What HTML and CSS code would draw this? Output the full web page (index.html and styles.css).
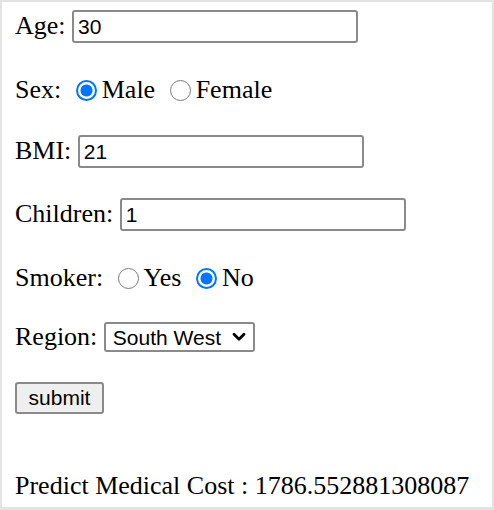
FILE: index.html
```html
<!DOCTYPE html>
<html>
<head>
<meta charset="utf-8">
<link rel="stylesheet" href="styles.css">
</head>
<body>
<div class="page">
  <form class="form">
    <div class="row first">
      <span class="label">Age:</span>
      <input class="field" type="text" value="30">
    </div>
    <div class="row choice">
      <span class="label">Sex:</span>
      <label class="opt"><input class="radio" type="radio" name="sex" checked>Male</label>
      <label class="opt"><input class="radio" type="radio" name="sex">Female</label>
    </div>
    <div class="row">
      <span class="label">BMI:</span>
      <input class="field" type="text" value="21">
    </div>
    <div class="row">
      <span class="label">Children:</span>
      <input class="field" type="text" value="1">
    </div>
    <div class="row choice">
      <span class="label">Smoker:</span>
      <label class="opt"><input class="radio" type="radio" name="smoker">Yes</label>
      <label class="opt"><input class="radio" type="radio" name="smoker" checked>No</label>
    </div>
    <div class="row tight">
      <span class="label">Region:</span>
      <span class="select-wrap">
        <select class="select">
          <option>South West</option>
        </select>
        <svg class="chev" width="14" height="10" viewBox="0 0 14 10"><path d="M2 2.2 L7 7.2 L12 2.2" fill="none" stroke="#000" stroke-width="2.8" stroke-linecap="round" stroke-linejoin="round"/></svg>
      </span>
    </div>
    <div class="row tight">
      <button class="btn" type="button">submit</button>
    </div>
    <div class="row result">
      <span class="label">Predict Medical Cost : 1786.552881308087</span>
    </div>
  </form>
</div>
</body>
</html>
```
FILE: styles.css
```css
html, body {
  margin: 0;
  padding: 0;
  background: #ffffff;
}
.page {
  box-sizing: border-box;
  width: 494px;
  height: 510px;
  border-style: solid;
  border-color: #e3e3e3;
  border-width: 2px 2px 3px 2px;
  padding: 7px 13px 0 13px;
  font-family: "Liberation Serif", "Times New Roman", serif;
  font-size: 26px;
  color: #000;
  overflow: hidden;
}
.form {
  display: flex;
  flex-direction: column;
  margin: 0;
}
.row {
  display: flex;
  align-items: center;
  gap: 6.5px;
  height: 34px;
  margin-top: 29px;
  white-space: nowrap;
}
.row.first { margin-top: 0; }
.row.choice { height: 30px; margin-top: 32px; }
.row.tight { margin-top: 27px; }
.row.result { height: 30px; margin-top: 56px; }
.label { line-height: 30px; }
.field {
  box-sizing: border-box;
  width: 286px;
  height: 33px;
  margin: 0;
  padding: 1px 3px 0 4px;
  border: 2px solid #8a8a8a;
  border-radius: 3px;
  font-family: "Liberation Sans", Arial, sans-serif;
  font-size: 21px;
  color: #000;
  background: #fff;
  outline: none;
}
.opt {
  display: flex;
  align-items: center;
}
.radio {
  -webkit-appearance: none;
  appearance: none;
  box-sizing: border-box;
  width: 21px;
  height: 21px;
  margin: 0 5px 0 8px;
  border: 1.6px solid #7a7a7a;
  border-radius: 50%;
  background: #fff;
}
.radio:checked {
  border: 2px solid #0075ff;
  background: radial-gradient(circle, #0075ff 0 5.6px, #fff 6.4px);
}
.select-wrap {
  position: relative;
  display: inline-block;
}
.select {
  -webkit-appearance: none;
  appearance: none;
  box-sizing: border-box;
  width: 151px;
  height: 30px;
  margin: 0;
  padding: 0 0 0 7px;
  border: 2px solid #8a8a8a;
  border-radius: 3px;
  background: #fff;
  font-family: "Liberation Sans", Arial, sans-serif;
  font-size: 21px;
  color: #000;
}
.chev {
  position: absolute;
  right: 9px;
  top: 10px;
  pointer-events: none;
}
.btn {
  box-sizing: border-box;
  width: 89px;
  height: 32px;
  margin: 0;
  padding: 0;
  border: 2px solid #8a8a8a;
  border-radius: 3px;
  background: #efefef;
  font-family: "Liberation Sans", Arial, sans-serif;
  font-size: 21px;
  color: #000;
}
```
